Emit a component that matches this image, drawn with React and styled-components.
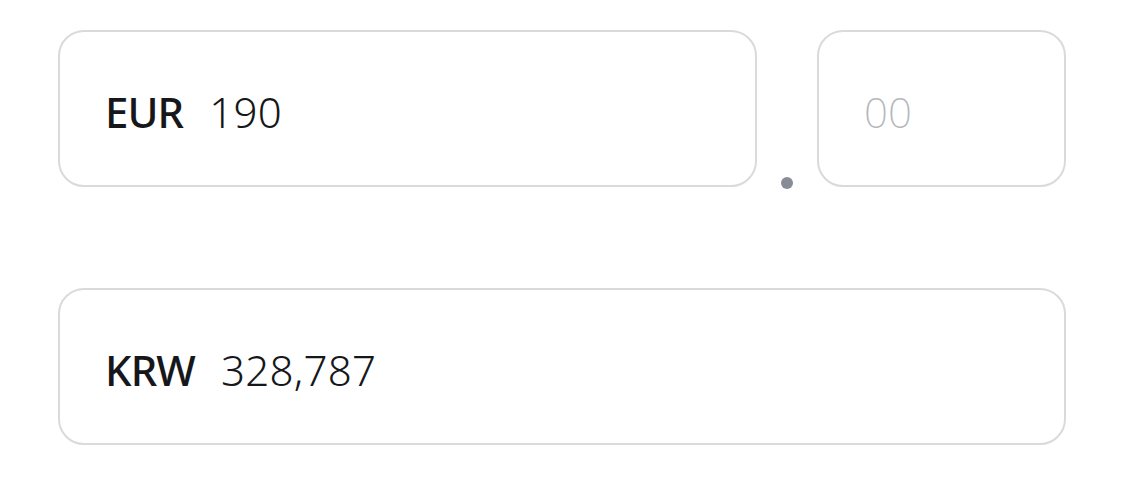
import React from "react";
import styled, { createGlobalStyle } from "styled-components";

const Global = createGlobalStyle`
  html, body { margin: 0; padding: 0; background: #ffffff; }
  body { font-family: "Noto Sans", "Open Sans", sans-serif; }
`;

const Page = styled.div`
  width: 1125px;
  height: 482px;
  box-sizing: border-box;
  padding: 30px 59px 0 58px;
  display: flex;
  flex-direction: column;
  gap: 101px;
`;

const Row = styled.div`
  display: flex;
  align-items: stretch;
`;

const Field = styled.div`
  box-sizing: border-box;
  height: 157px;
  flex: ${(p) => (p.$width ? `0 0 ${p.$width}px` : "1 1 auto")};
  border: 2px solid #d9dadd;
  border-radius: 26px;
  display: flex;
  align-items: center;
  padding: 5px 0 0 45px;
  font-size: 42px;
  color: #16171a;
`;

const Code = styled.span`
  font-weight: 500;
  margin-right: 26px;
  letter-spacing: -0.9px;
`;

const Value = styled.span`
  font-weight: 300;
  letter-spacing: 0.3px;
`;

const Placeholder = styled.span`
  color: #b4b7bc;
  font-weight: 200;
`;

const Separator = styled.div`
  flex: 0 0 60px;
  display: flex;
  align-items: flex-end;
  justify-content: center;
`;

const Dot = styled.span`
  width: 12px;
  height: 12px;
  border-radius: 50%;
  background: #878c95;
  margin-bottom: -2px;
`;

export default function App() {
  return (
    <>
      <Global />
      <Page>
        <Row>
          <Field $width={699}>
            <Code>EUR</Code>
            <Value>190</Value>
          </Field>
          <Separator>
            <Dot />
          </Separator>
          <Field $width={249}>
            <Placeholder>00</Placeholder>
          </Field>
        </Row>
        <Row>
          <Field>
            <Code>KRW</Code>
            <Value>328,787</Value>
          </Field>
        </Row>
      </Page>
    </>
  );
}
